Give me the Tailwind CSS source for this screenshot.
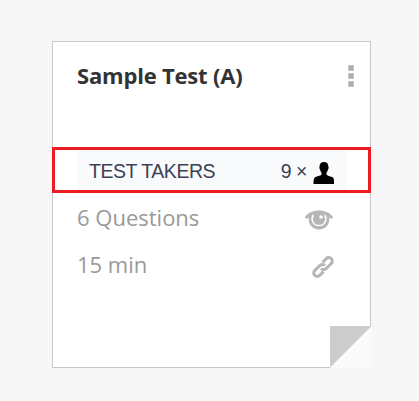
<!DOCTYPE html>
<html lang="en">
<head>
    <meta charset="UTF-8">
    <meta name="viewport" content="width=device-width, initial-scale=1.0">
    <title>Sample Test (A)</title>
    <script src="https://cdn.jsdelivr.net/npm/@tailwindcss/browser@4"></script>
</head>
<body class="bg-[#f7f7f7] h-screen overflow-hidden pt-[41px] pl-[52px]">

    <!-- Test Card -->
    <div class="relative w-[319px] h-[327px] bg-white border border-[#c8c8c8] font-['Open_Sans',sans-serif]">

        <!-- Title -->
        <div class="flex justify-between h-[105px] pl-6 pr-4 pt-[18px]">
            <h2 class="text-[22px] leading-[30px] font-bold tracking-[-0.2px] text-[#333333] whitespace-nowrap">Sample Test (A)</h2>
            <button class="flex flex-col gap-[2px] w-[6px] pt-[5px]" aria-label="Menu">
                <span class="w-[6px] h-[6px] shrink-0 bg-[#adadad] ring-1 ring-inset ring-[#d6d6d6]/60"></span>
                <span class="w-[6px] h-[6px] shrink-0 bg-[#adadad] ring-1 ring-inset ring-[#d6d6d6]/60"></span>
                <span class="w-[6px] h-[6px] shrink-0 bg-[#adadad] ring-1 ring-inset ring-[#d6d6d6]/60"></span>
            </button>
        </div>

        <!-- Test takers -->
        <div class="relative -mx-px h-[46px] border-3 border-[#ed1c24] pl-[22px] pr-[21px]">
            <div class="flex items-center h-full bg-[#f9fafc] pl-3 pr-3 font-['Liberation_Sans',sans-serif] text-[19.5px] tracking-[-0.45px] text-[#3b4256]">
                <span class="flex-1 pt-[4px] whitespace-nowrap">TEST TAKERS</span>
                <span class="mr-[6px] pt-[4px] whitespace-nowrap">9 ×</span>
                <svg class="w-[22px] h-[22px] mt-[6px]" viewBox="0 0 22 22" fill="#000">
                    <path d="M11 0C8 0 6.5 1.8 6.6 4.5C6.1 4.7 6.3 7 7 7.4C7.3 9 8 10 8.5 10.7V12.5C7.5 14 3.5 14.2 1.8 15.5C.5 16.6.5 19 .5 22H21V19C21 16.5 20.5 15.6 19 15C17 14.1 14.2 13.8 13.5 12.5V10.7C14.3 9.9 14.8 8.8 15 7.4C15.8 7 15.9 4.8 15.3 4.5C15.4 1.8 14 0 11 0Z"/>
                </svg>
            </div>
        </div>

        <!-- Details -->
        <div class="pl-6 pr-9 pt-px text-[22px] text-[#999999]">
            <div class="flex items-center justify-between h-[47px]">
                <span>6 Questions</span>
                <svg class="w-[30px] h-[22px] mt-[4px]" viewBox="0 0 30 22">
                    <path d="M.8 8.5C4 3.5 9 1.5 15 1.5S26 3.5 29.2 8.5L27.8 9.8C26.8 9.3 26 9 25.3 8.8C26 15.5 21.5 20.5 15 20.5S4 15.5 4.7 8.8C4 9 3.2 9.3 2.2 9.8Z" fill="#b6b6b6"/>
                    <path d="M9.3 6C6.5 10.5 9 16.6 15 16.6S23.5 10.5 20.7 6" fill="none" stroke="#fff" stroke-width="1.5"/>
                    <circle cx="17" cy="8" r="1.8" fill="#fff"/>
                </svg>
            </div>
            <div class="flex items-center justify-between h-[47px]">
                <span>15 min</span>
                <svg class="w-[22px] h-[22px] mt-[4px]" viewBox="0 0 22 22" fill="none" stroke="#b6b6b6" stroke-width="3">
                    <path d="M9 12.5A3.5 3.5 0 0 0 14 12.6L19.2 7.6A3.5 3.5 0 0 0 14.3 2.6L10.5 6.4"/>
                    <path d="M13 9.5A3.5 3.5 0 0 0 8 9.4L2.8 14.4A3.5 3.5 0 0 0 7.7 19.4L11.5 15.6"/>
                </svg>
            </div>
        </div>

        <!-- Folded corner -->
        <svg class="absolute -right-[2px] -bottom-px w-[42px] h-[42px]" viewBox="0 0 42 42">
            <path d="M0 0H42V42H0Z" fill="#fafafa"/>
            <path d="M0 0H41.5L0 41.5Z" fill="#cccccc"/>
        </svg>
    </div>

</body>
</html>
